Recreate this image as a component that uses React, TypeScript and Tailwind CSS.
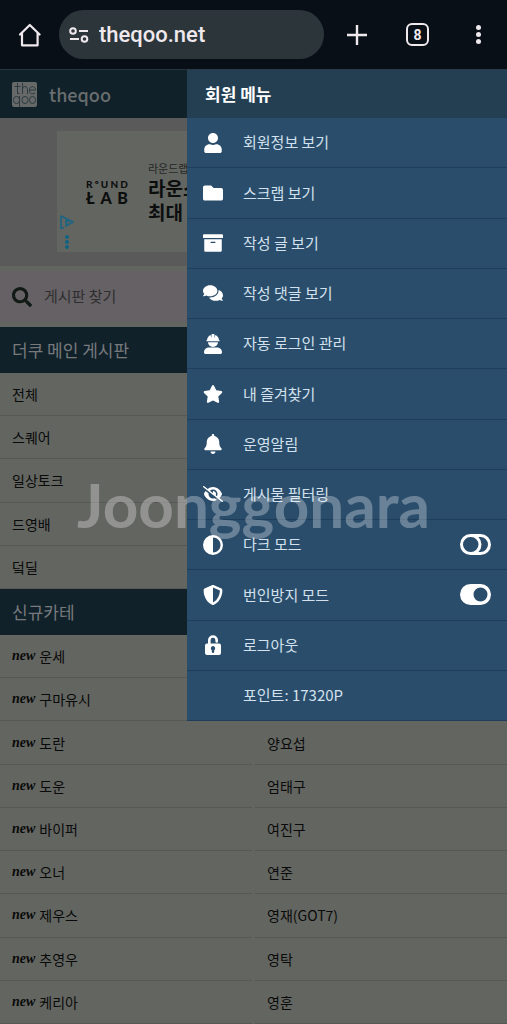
import { useState, type ReactNode } from "react";
import {
  FaArchive,
  FaBell,
  FaComments,
  FaFolder,
  FaSearch,
  FaStar,
  FaUser,
} from "react-icons/fa";
import {
  FaCircleHalfStroke,
  FaEyeSlash,
  FaShieldHalved,
} from "react-icons/fa6";

type MenuItem = {
  label: string;
  icon: ReactNode;
  toggle?: "on" | "off";
};

function WorkerIcon() {
  return (
    <svg viewBox="0 0 18 20" className="h-5 w-[18px]" fill="currentColor">
      <path d="M3 6.200C3.100 3.700 4.600 1.700 6.700.9L7.500 4.200V.6C7.500.2 7.800 0 8.100 0h1.800c.3 0 .6.200.6.600v3.600l.8-3.300C13.400 1.700 14.900 3.700 15 6.200h.3c.3 0 .5.200.5.500s-.2.500-.5.500H2.700c-.3 0-.5-.2-.5-.5s.2-.5.500-.5z" />
      <path d="M4 8.300h10a5 4.700 0 0 1-10 0z" />
      <path d="M5.300 13.600h7.400c3 0 5.300 2 5.300 4.600 0 1-.7 1.800-1.700 1.800H1.700C.7 20 0 19.200 0 18.200c0-2.600 2.300-4.600 5.300-4.600z" />
    </svg>
  );
}

function UnlockIcon() {
  return (
    <svg viewBox="0 0 16 20" className="h-5 w-4">
      <path
        d="M4.300 9V5.200a3.700 3.700 0 0 1 7.400 0v1.300"
        fill="none"
        stroke="currentColor"
        strokeWidth="2.600"
        strokeLinecap="round"
      />
      <path
        fill="currentColor"
        fillRule="evenodd"
        d="M2 8.500h12a2 2 0 0 1 2 2V18a2 2 0 0 1-2 2H2a2 2 0 0 1-2-2v-7.500a2 2 0 0 1 2-2zM8 11a2.300 2.300 0 0 0-1.200 4.200V16.800a1.200 1.200 0 0 0 2.400 0V15.200A2.300 2.300 0 0 0 8 11z"
      />
    </svg>
  );
}

function ToggleIcon({ on }: { on: boolean }) {
  return (
    <svg viewBox="0 0 31 21" className="h-[21px] w-[31px] shrink-0">
      {on ? (
        <path
          fill="white"
          fillRule="evenodd"
          d="M10.500 0h10a10.500 10.500 0 0 1 0 21h-10a10.500 10.500 0 0 1 0-21zM20.500 3.500a7 7 0 1 0 0 14 7 7 0 0 0 0-14z"
        />
      ) : (
        <g fill="none" stroke="white" strokeWidth="3">
          <rect x="1.500" y="1.500" width="28" height="18" rx="9" />
          <path d="M11 1.500a9 9 0 0 1 0 18" />
        </g>
      )}
    </svg>
  );
}

const menuItems: MenuItem[] = [
  { label: "회원정보 보기", icon: <FaUser className="size-5" /> },
  { label: "스크랩 보기", icon: <FaFolder className="size-5" /> },
  { label: "작성 글 보기", icon: <FaArchive className="size-5" /> },
  { label: "작성 댓글 보기", icon: <FaComments className="size-5" /> },
  { label: "자동 로그인 관리", icon: <WorkerIcon /> },
  { label: "내 즐겨찾기", icon: <FaStar className="size-5" /> },
  { label: "운영알림", icon: <FaBell className="size-5" /> },
  { label: "게시물 필터링", icon: <FaEyeSlash className="size-5" /> },
  {
    label: "다크 모드",
    icon: <FaCircleHalfStroke className="size-5" />,
    toggle: "off",
  },
  {
    label: "번인방지 모드",
    icon: <FaShieldHalved className="size-5" />,
    toggle: "on",
  },
  { label: "로그아웃", icon: <UnlockIcon /> },
];

const mainBoards = ["전체", "스퀘어", "일상토크", "드영배", "덬딜"];

const newBoards = [
  ["운세", ""],
  ["구마유시", ""],
  ["도란", "양요섭"],
  ["도운", "엄태구"],
  ["바이퍼", "여진구"],
  ["오너", "연준"],
  ["제우스", "영재(GOT7)"],
  ["추영우", "영탁"],
  ["케리아", "영훈"],
];

function BrowserBar() {
  return (
    <header className="flex h-[69px] items-center bg-[#080f17] pr-[19px] pl-4 text-[#efe9ee]">
      <button type="button" aria-label="홈" className="mr-[15px]">
        <svg
          viewBox="0 0 28 28"
          className="size-7"
          fill="none"
          stroke="currentColor"
          strokeWidth="2.200"
          strokeLinejoin="round"
          strokeLinecap="round"
        >
          <path d="M4 13.500 13.800 4 23.600 13.500M6 12v12.300h15.600V12" />
        </svg>
      </button>
      <div className="flex h-[49px] min-w-0 flex-1 items-center gap-[10px] rounded-full bg-[#2b353a] pl-[10px]">
        <svg
          viewBox="0 0 20 16"
          className="h-4 w-5 shrink-0"
          fill="none"
          stroke="currentColor"
          strokeWidth="2"
        >
          <circle cx="4" cy="4" r="2.800" />
          <path d="M10 4h9M1 12h9" />
          <circle cx="15.500" cy="12" r="2.800" />
        </svg>
        <input
          type="text"
          aria-label="주소"
          defaultValue="theqoo.net"
          className="w-full min-w-0 bg-transparent font-['Roboto',sans-serif] text-[22px] font-medium outline-none"
        />
      </div>
      <div className="ml-[23px] flex items-center gap-[39px]">
        <button type="button" aria-label="새 탭">
          <svg
            viewBox="0 0 20 20"
            className="size-5"
            stroke="currentColor"
            strokeWidth="2.400"
          >
            <path d="M10 0v20M0 10h20" />
          </svg>
        </button>
        <button
          type="button"
          className="flex size-[23px] items-center justify-center rounded-md border-2 border-current font-['Roboto',sans-serif] text-sm leading-none font-bold"
        >
          8
        </button>
        <button
          type="button"
          aria-label="더보기"
          className="flex w-5 flex-col items-center gap-[2px]"
        >
          <span className="size-[5px] rounded-full bg-current" />
          <span className="size-[5px] rounded-full bg-current" />
          <span className="size-[5px] rounded-full bg-current" />
        </button>
      </div>
    </header>
  );
}

function SiteHeader() {
  return (
    <div className="flex h-[49px] items-center gap-3 border-t border-[#26343b] bg-[#10212a] px-3">
      <svg viewBox="0 0 25 25" className="size-[25px]">
        <rect width="25" height="25" rx="2" fill="#676968" />
        <g fill="none" stroke="#2b3a40" strokeWidth="1">
          <path d="M5.500 1v10.500h2M2.500 4.500h6M10.500 1v11M10.500 7.500c0-4 5-4 5 0V12M17.500 8h6c0-4.500-6-4.500-6 0s3 4.500 5.500 3" />
          <rect x="1.500" y="14.500" width="6" height="7" rx="3" />
          <path d="M7.500 14v11" />
          <rect x="10" y="14.500" width="6" height="7" rx="3" />
          <rect x="17.500" y="14.500" width="6" height="7" rx="3" />
        </g>
      </svg>
      <a href="#" className="text-lg font-medium text-[#696d6e]">
        theqoo
      </a>
    </div>
  );
}

function AdBanner() {
  return (
    <div className="bg-[#5a5a5a] px-[57px] pt-[13px] pb-[14px]">
      <div className="flex h-[121px] overflow-hidden bg-[#636561]">
        <div className="flex w-[29px] shrink-0 flex-col justify-end gap-[6px] pb-[3px] pl-[3px]">
          <svg
            viewBox="0 0 14 14"
            className="size-[14px]"
            fill="none"
            stroke="#1f6480"
            strokeWidth="1.700"
            strokeLinejoin="round"
          >
            <path d="M4 12.500 1 13.500V1l12 6-7 4V5l3 2" />
          </svg>
          <div className="ml-[5px] flex flex-col gap-px">
            <span className="size-1 rounded-full bg-[#0f6482]" />
            <span className="size-1 rounded-full bg-[#0f6482]" />
            <span className="size-1 rounded-full bg-[#0f6482]" />
          </div>
        </div>
        <div className="mr-5 flex w-[42px] shrink-0 flex-col justify-center font-['Lato',sans-serif] font-black text-[#0c0e0e]">
          <div className="flex justify-between text-[10px] leading-3">
            <span>R</span>
            <span>º</span>
            <span>U</span>
            <span>N</span>
            <span>D</span>
          </div>
          <div className="flex justify-between text-base leading-4">
            <span>Ł</span>
            <span>A</span>
            <span>B</span>
          </div>
        </div>
        <div className="flex flex-col justify-center whitespace-nowrap text-[#0c0e0e]">
          <span className="text-[11px] leading-4 text-[#242826]">
            라운드랩 공식몰
          </span>
          <span className="text-[19px] leading-6 font-bold">라운스토어</span>
          <span className="text-[19px] leading-6 font-bold">최대 혜택</span>
        </div>
      </div>
    </div>
  );
}

function SearchBar() {
  return (
    <div className="bg-[#636561] py-[5px]">
      <label className="flex h-[51px] items-center gap-3 bg-[#656165] px-3">
        <FaSearch className="size-5 shrink-0 text-[#121a16]" />
        <input
          type="search"
          aria-label="게시판 찾기"
          placeholder="게시판 찾기"
          className="w-full bg-transparent text-[15px] outline-none placeholder:text-[#2f2f30]"
        />
      </label>
    </div>
  );
}

function SectionTitle({ children }: { children: ReactNode }) {
  return (
    <h2 className="flex h-[46px] items-center bg-[#10212a] px-3 text-[17px] text-[#77797c]">
      {children}
    </h2>
  );
}

function BoardLink({ label, isNew }: { label: string; isNew?: boolean }) {
  return (
    <a
      href="#"
      className="flex items-center gap-1 border-b border-[#565856] px-3 text-sm text-[#090a09]"
    >
      {isNew && (
        <em className="font-['Liberation_Serif',serif] font-bold">new</em>
      )}
      {label}
    </a>
  );
}

function MenuRow({ item }: { item: MenuItem }) {
  const [on, setOn] = useState(item.toggle === "on");

  const body = (
    <>
      <span className="flex w-5 shrink-0 justify-center text-white">
        {item.icon}
      </span>
      <span className="flex-1">{item.label}</span>
    </>
  );

  if (item.toggle) {
    return (
      <label className="flex cursor-pointer items-center gap-5 border-b border-[#1e3e5b] px-4">
        {body}
        <input
          type="checkbox"
          checked={on}
          onChange={(e) => setOn(e.target.checked)}
          className="sr-only"
        />
        <ToggleIcon on={on} />
      </label>
    );
  }

  return (
    <a
      href="#"
      className="flex items-center gap-5 border-b border-[#1e3e5b] px-4"
    >
      {body}
    </a>
  );
}

function MemberMenu() {
  return (
    <aside className="absolute top-0 right-0 w-[320px] bg-[#2a4d6b]">
      <h2 className="flex h-[49px] items-center border-t border-[#2a3a48] bg-[#243e52] px-[18px] text-[17px] font-bold text-white">
        회원 메뉴
      </h2>
      <nav className="grid min-h-[603px] auto-rows-fr text-[15px] text-[#d3e1ee]">
        {menuItems.map((item) => (
          <MenuRow key={item.label} item={item} />
        ))}
        <p className="flex items-center border-b border-[#1e3e5b] pl-14">
          포인트: 17320P
        </p>
      </nav>
    </aside>
  );
}

export default function App() {
  return (
    <div className="min-h-screen bg-[#636561] font-['Noto_Sans_CJK_KR',sans-serif]">
      <BrowserBar />
      <div className="relative">
        <main>
          <SiteHeader />
          <AdBanner />
          <SearchBar />
          <SectionTitle>더쿠 메인 게시판</SectionTitle>
          <div className="grid min-h-[216px] auto-rows-fr">
            {mainBoards.map((name) => (
              <BoardLink key={name} label={name} />
            ))}
          </div>
          <SectionTitle>신규카테</SectionTitle>
          <div className="grid min-h-[389px] auto-rows-fr grid-cols-2 gap-x-[3px]">
            {newBoards.map(([left, right]) => [
              <BoardLink key={left} label={left} isNew />,
              <BoardLink key={`${left}-right`} label={right} />,
            ])}
          </div>
        </main>
        <MemberMenu />
        {/* Watermark */}
        <div className="pointer-events-none absolute inset-x-0 top-[395px] text-center font-['Lato',sans-serif] text-[62px] leading-[80px] font-bold text-white/30">
          Joonggonara
        </div>
      </div>
    </div>
  );
}
